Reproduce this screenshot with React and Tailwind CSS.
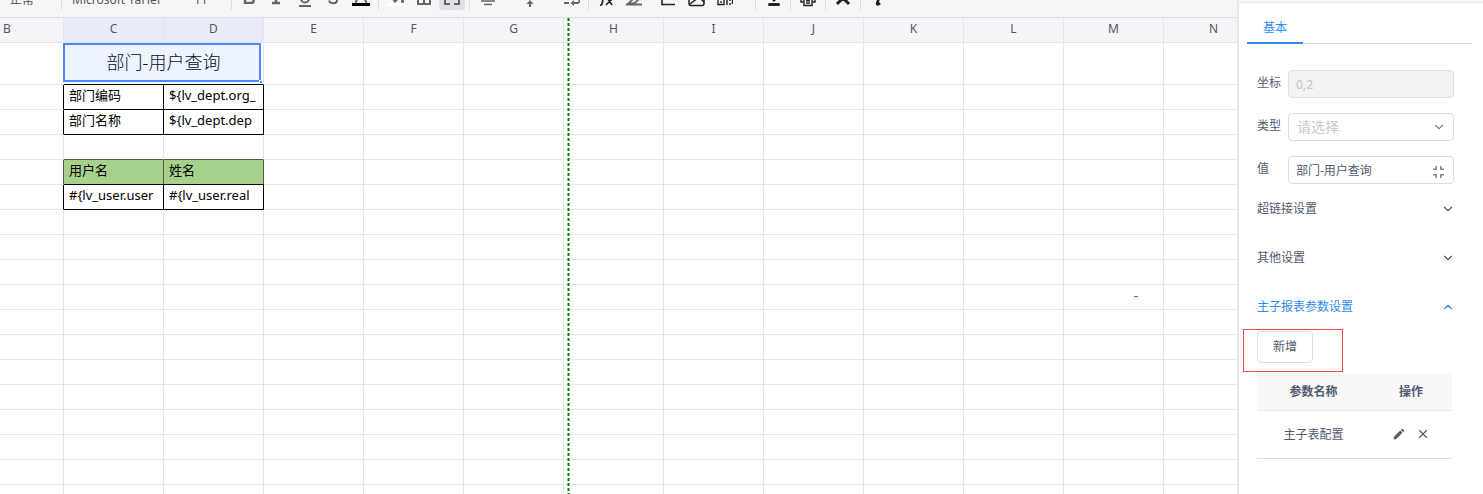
import React, { useState } from 'react';
import { ChevronDown, ChevronUp, X } from 'lucide-react';
import { MdEdit } from 'react-icons/md';

const columns = ['B', 'C', 'D', 'E', 'F', 'G', 'H', 'I', 'J', 'K', 'L', 'M', 'N', 'O', 'P', 'Q', 'R', 'S', 'T'];

const plain = { r: 'border-r-[#e6e6e6]', b: 'border-b-[#e6e6e6]' };
const black = { r: 'border-r-black', b: 'border-b-black' };
const olive = { r: 'border-r-[#4b5e3f]', b: 'border-b-[#4b5e3f]' };

// the cells of columns B, C and D; everything right of them is empty
const rows = [
    [{ r: black, b: plain }, { text: '部门编码', r: black, b: black }, { text: '${lv_dept.org_', r: black, b: black }],
    [{ r: black, b: plain }, { text: '部门名称', r: black, b: black }, { text: '${lv_dept.dep', r: black, b: black }],
    [{ r: plain, b: plain }, { r: plain, b: olive }, { r: plain, b: olive }],
    [{ r: olive, b: plain }, { text: '用户名', r: olive, b: black, fill: true }, { text: '姓名', r: olive, b: black, fill: true }],
    [{ r: black, b: plain }, { text: '#{lv_user.user', r: black, b: black }, { text: '#{lv_user.real', r: black, b: black }]
];

const emptyRows = Array.from({ length: 40 }, (_, i) => i);

function Divider() {
    return <span className="mx-[3px] h-6 w-px shrink-0 bg-[#dcdee2]" />;
}

function Tool({ label, active, wide, dark, children }) {
    return (
        <button
            type="button"
            aria-label={label}
            className={`mx-px flex h-[26px] shrink-0 items-end pb-0.5 pl-1 ${wide ? 'w-10' : 'w-[26px]'} ${active ? 'rounded-sm bg-[#dfe1e4]' : ''} ${dark ? 'text-[#222222]' : 'text-[#666666]'}`}
        >
            <svg width="18" height="18" viewBox="0 0 18 18" fill="none" stroke="currentColor" strokeWidth="2">
                {children}
            </svg>
        </button>
    );
}

function Toolbar() {
    return (
        <div className="flex h-[18px] items-end overflow-hidden border-b border-[#dcdee2] bg-[#f5f6f7] pb-[7px] text-xs text-[#555555]">
            <button type="button" className="h-[26px] w-[58px] shrink-0 pt-1.5 pl-2.5 text-left">正常</button>
            <Divider />
            <button type="button" className="h-[26px] w-[122px] shrink-0 pt-1.5 pl-[7px] text-left">Microsoft YaHei</button>
            <button type="button" className="h-[26px] w-[41px] shrink-0 pt-1.5 pl-[7px] text-left">11</button>
            <Divider />
            <Tool label="加粗">
                <path d="M5 2h5a2.8 2.8 0 0 1 0 5.500H5zM5 7.500h6a2.700 2.700 0 0 1 0 5.400H5z" strokeWidth="2.400" />
            </Tool>
            <Tool label="斜体">
                <path d="M7 2h7M4 13h8M10.500 2l-3 11" strokeWidth="2.400" />
            </Tool>
            <Tool label="下划线">
                <path d="M5 1v7.500a4 4 0 0 0 8 0V1M3 16h12" />
            </Tool>
            <Tool label="删除线">
                <path d="M13 4.500C12 1 5.500 1.500 5.500 5c0 4 7.500 2 7.500 5.500 0 3.500-7 3.500-8 0M2 7.500h14" />
            </Tool>
            <Tool label="字体颜色">
                <path d="M3.500 13L9 0l5.500 13M5 9h8" />
                <path d="M0 14.500h18" stroke="#000" strokeWidth="3" />
            </Tool>
            <Divider />
            <Tool label="填充颜色">
                <path d="M8 1l6 6-6 6-5-6z" fill="currentColor" stroke="none" />
                <path d="M15.500 8c1 1.500 1.500 2.500 1.500 3.500a1.500 1.500 0 0 1-3 0c0-1 .5-2 1.500-3.500z" fill="currentColor" stroke="none" />
                <path d="M0 14.500h18" stroke="#fff" strokeWidth="3" />
            </Tool>
            <Tool label="边框">
                <path d="M3 2h12v12H3zM9 2v12M3 8h12" />
            </Tool>
            <Tool label="合并单元格" active>
                <path d="M7 2H2v4M11 2h5v4M2 10v4h5M16 10v4h-5M1 8h5M17 8h-5" />
            </Tool>
            <Divider />
            <Tool label="水平对齐" wide>
                <path d="M3 3h14M6 7h8M3 11h14M6 14.500h8" strokeWidth="1.600" />
            </Tool>
            <Tool label="垂直对齐" wide>
                <path d="M2 8h14M10 17v-5M10 0v4" />
                <path d="M10 10l3.500 4h-7zM10 6l3.500-4h-7z" fill="currentColor" stroke="none" />
            </Tool>
            <Tool label="自动换行">
                <path d="M2 4h15M2 8h13a2.500 2.500 0 0 1 0 5h-4M2 13h5" strokeWidth="1.800" />
                <path d="M12 10v6l-3.500-3z" fill="currentColor" stroke="none" />
            </Tool>
            <Divider />
            <Tool label="公式" dark>
                <path d="M3 15c2 .3 2.300-1 3-6.500S7.500 1 10.500 2M4 6h6M10 8l5 7M16 8l-7 7" strokeWidth="1.700" />
            </Tool>
            <Tool label="斜线">
                <path d="M1 14.500h16M3 14L13 4l3 3-6 6z" strokeWidth="1.800" />
            </Tool>
            <span className="w-1.5 shrink-0" />
            <Tool label="图表" dark>
                <path d="M3 1v13.500h13M6 9l4-4 2 2 4-5" strokeWidth="1.600" />
            </Tool>
            <Tool label="图片" dark>
                <rect x="2" y="1" width="15" height="14.500" rx="2" strokeWidth="1.500" />
                <path d="M3 14l9-7 5 5M5 5h3" strokeWidth="1.500" />
            </Tool>
            <Tool label="条码" dark>
                <path d="M3 2h6v5H3zM3 9h6v5.500H3zM12 2v13M15 2v9M17.500 9v5M15 13v2M6 11v2" strokeWidth="1.400" />
            </Tool>
            <span className="w-3.5 shrink-0" />
            <Divider />
            <Tool label="下载" dark>
                <path d="M10 0v9" />
                <path d="M5 7h10l-5 5z" fill="currentColor" stroke="none" />
                <path d="M5.500 14.500h9" strokeWidth="3" strokeLinecap="round" />
            </Tool>
            <Divider />
            <Tool label="打印" dark>
                <path d="M5 4V1h8v3M4.500 12H2V5h14v7h-2.500M5 8.500h8v7H5zM7 10.800h4M7 13h4" strokeWidth="1.400" />
            </Tool>
            <Divider />
            <Tool label="清空" dark>
                <path d="M3 2l12 12M15 2L3 14" strokeWidth="3" />
            </Tool>
            <Divider />
            <Tool label="信息" dark>
                <path d="M7 7h3.500l-2.500 6.500c0 1.500 1 1.500 3-.5" strokeWidth="2.600" />
                <circle cx="10.500" cy="3" r="1" />
            </Tool>
        </div>
    );
}

function Sheet() {
    const cell = 'h-[25px] overflow-hidden border-r border-b p-0 whitespace-nowrap';

    return (
        <div className="relative flex-1 overflow-hidden bg-white">
            <table className="w-[1864px] table-fixed border-separate border-spacing-0">
                <thead>
                    <tr>
                        {columns.map((name, i) => (
                            <th
                                key={name}
                                className={`h-[25px] border-r border-b border-[#e3e5e8] p-0 pb-0.5 text-xs leading-5 font-normal text-[#585757] ${i === 0 ? 'w-16 pl-[3px] text-left' : 'w-[100px]'} ${i === 1 || i === 2 ? 'bg-[#e7ecf8]' : 'bg-[#f3f5f9]'}`}
                            >
                                {name}
                            </th>
                        ))}
                    </tr>
                </thead>
                <tbody className="text-[13px] leading-4 text-black">
                    <tr>
                        <td className="h-[42px] border-r border-b border-[#e6e6e6]" />
                        <td colSpan={2} className="relative border-r border-b border-r-[#e6e6e6] border-b-black p-0 pb-1 text-center text-lg leading-6 font-light">
                            部门-用户查询
                            <span className="absolute top-0 right-0.5 bottom-0.5 -left-px border-2 border-[#4b89ff] bg-[#4b89ff]/10" />
                            <span className="absolute right-0 bottom-0 size-1 border border-white bg-[#4b89ff]" />
                        </td>
                        {columns.slice(3).map((name) => (
                            <td key={name} className="border-r border-b border-[#e6e6e6]" />
                        ))}
                    </tr>
                    {rows.map((row, i) => (
                        <tr key={i}>
                            {row.map((c, j) => (
                                <td key={j} className={`${cell} pb-1 pl-[5px] ${c.r.r} ${c.b.b} ${c.fill ? 'bg-[#a8d08d]' : ''}`}>
                                    {c.text}
                                </td>
                            ))}
                            {columns.slice(3).map((name) => (
                                <td key={name} className={`${cell} border-[#e6e6e6]`} />
                            ))}
                        </tr>
                    ))}
                    {emptyRows.map((n) => (
                        <tr key={n}>
                            {columns.map((name) => (
                                <td key={name} className={`${cell} border-[#e6e6e6]`} />
                            ))}
                        </tr>
                    ))}
                </tbody>
            </table>

            {/* page break */}
            <svg className="absolute top-0 left-[567px] h-full w-[3px]">
                <line x1="1.5" y1="0" x2="1.5" y2="2000" stroke="#008000" strokeOpacity="0.5" strokeWidth="3" strokeDasharray="3 2" />
                <line x1="1.5" y1="0" x2="1.5" y2="2000" stroke="#008000" strokeWidth="1" strokeDasharray="3 2" />
            </svg>
            <span className="absolute top-[278px] left-[1134px] h-px w-1 bg-[#f5222d]" />
        </div>
    );
}

function Section({ title, open, onToggle, children }) {
    return (
        <section>
            <button
                type="button"
                aria-expanded={open}
                onClick={onToggle}
                className={`flex h-[49px] w-full items-center justify-between text-xs ${open ? 'text-[#2d8cf0]' : 'text-[#515a6e]'}`}
            >
                {title}
                {open ? <ChevronUp size={14} className="-mr-[3px]" /> : <ChevronDown size={14} className="-mr-[3px]" />}
            </button>
            {open && children}
        </section>
    );
}

function ParamTable() {
    return (
        <>
            <div className="relative w-fit">
                <button type="button" className="block h-8 w-14 rounded border border-[#dcdee2] bg-white text-xs text-[#515a6e]">
                    新增
                </button>
                <span className="pointer-events-none absolute -top-0.5 -right-[30px] -bottom-[9px] -left-3.5 border border-[#f04545]" />
            </div>
            <table className="mt-2.5 w-full table-fixed border-separate border-spacing-0 text-center text-xs text-[#515a6e]">
                <thead>
                    <tr className="bg-[#f8f8f9]">
                        <th className="h-[38px] w-[58%] border-b border-[#e8eaec] p-0 font-bold">参数名称</th>
                        <th className="border-b border-[#e8eaec] p-0 font-bold">操作</th>
                    </tr>
                </thead>
                <tbody>
                    <tr>
                        <td className="h-12 border-b border-[#dcdee2] p-0">主子表配置</td>
                        <td className="border-b border-[#dcdee2] p-0 pb-0.5">
                            <div className="flex items-center justify-center gap-2.5">
                                <button type="button" aria-label="编辑"><MdEdit size={14} /></button>
                                <button type="button" aria-label="删除"><X size={14} strokeWidth={2} /></button>
                            </div>
                        </td>
                    </tr>
                </tbody>
            </table>
        </>
    );
}

function PropertyPanel() {
    const [value, setValue] = useState('部门-用户查询');
    const [openSection, setOpenSection] = useState('params');

    const toggle = (name) => setOpenSection(prev => (prev === name ? '' : name));

    return (
        <aside className="flex w-[246px] shrink-0 flex-col border-l-2 border-[#e8e8e8] bg-[#f8f8f9] pt-0.5 text-xs text-[#515a6e]">
            <div className="flex-1 rounded-tl border-t border-[#e8e8e8] bg-white">
                <nav className="mr-[11px] ml-2 flex border-b border-[#dcdee2]">
                    <button type="button" className="-mb-px h-[41px] w-14 border-b-2 border-[#2d8cf0] pt-2.5 text-[#2d8cf0]">
                        基本
                    </button>
                </nav>

                <form className="flex flex-col gap-[15px] pt-[26px] pr-[29px] pl-[18px]" onSubmit={(e) => e.preventDefault()}>
                    <div className="flex">
                        <label htmlFor="coord" className="w-[31px] shrink-0 leading-[26px]">坐标</label>
                        <input
                            id="coord"
                            disabled
                            value="0,2"
                            className="h-7 w-full min-w-0 rounded border border-[#dcdee2] bg-[#f3f3f3] px-[7px] font-medium text-[#c5c8ce]"
                        />
                    </div>
                    <div className="flex">
                        <label htmlFor="type" className="w-[31px] shrink-0 leading-[26px]">类型</label>
                        <div className="relative w-full">
                            <select
                                id="type"
                                defaultValue=""
                                className="block h-7 w-full appearance-none rounded border border-[#dcdee2] bg-white px-2 text-sm leading-5 text-[#c5c8ce]"
                            >
                                <option value="">请选择</option>
                            </select>
                            <ChevronDown size={14} className="pointer-events-none absolute top-[7px] right-2 text-[#808695]" />
                        </div>
                    </div>
                    <div className="flex">
                        <label htmlFor="value" className="w-[31px] shrink-0 leading-[26px]">值</label>
                        <div className="relative w-full">
                            <input
                                id="value"
                                value={value}
                                onChange={(e) => setValue(e.target.value)}
                                className="block h-7 w-full rounded border border-[#dcdee2] bg-white pr-7 pl-[7px]"
                            />
                            <svg className="pointer-events-none absolute top-2.5 right-[9px]" width="13" height="12" viewBox="0 0 13 12" fill="none" stroke="#808695" strokeWidth="1.600">
                                <path d="M1 3.200h3.200V0M8.800 0v3.200H12M1 8.800h3.200V12M8.800 12V8.800H12" />
                            </svg>
                        </div>
                    </div>
                </form>

                <div className="pr-[31px] pl-[18px]">
                    <Section title="超链接设置" open={openSection === 'link'} onToggle={() => toggle('link')} />
                    <Section title="其他设置" open={openSection === 'other'} onToggle={() => toggle('other')} />
                    <Section title="主子报表参数设置" open={openSection === 'params'} onToggle={() => toggle('params')}>
                        <ParamTable />
                    </Section>
                </div>
            </div>
        </aside>
    );
}

export default function App() {
    return (
        <div className="flex h-screen overflow-hidden font-['Noto_Sans','Noto_Sans_CJK_SC',sans-serif]">
            <main className="flex min-w-0 flex-1 flex-col">
                <Toolbar />
                <Sheet />
            </main>
            <PropertyPanel />
        </div>
    );
}
